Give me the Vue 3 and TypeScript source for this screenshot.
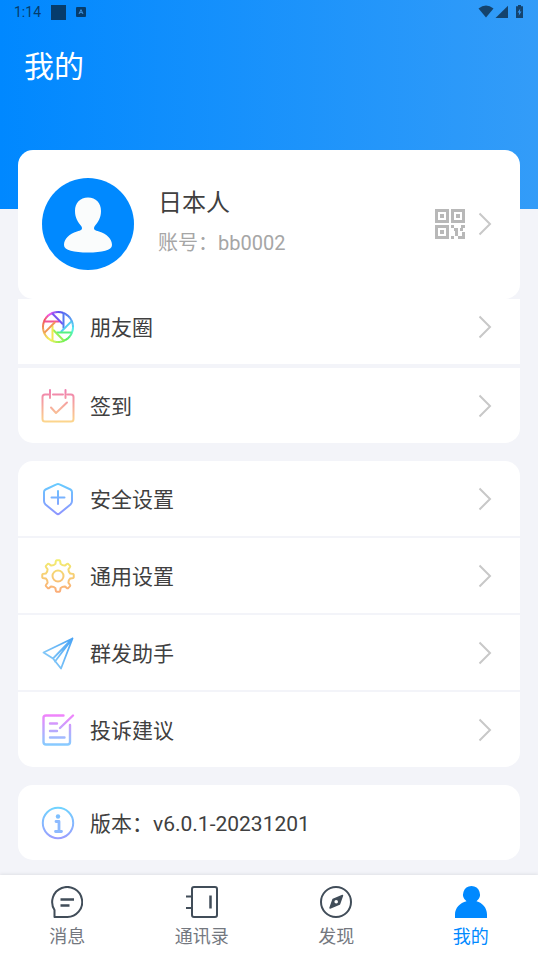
<script setup lang="ts">
interface Row {
  icon: string
  label: string
  href: string
}

const activityRows: Row[] = [
  { icon: 'moments', label: '朋友圈', href: '#moments' },
  { icon: 'checkin', label: '签到', href: '#checkin' },
]

const settingRows: Row[] = [
  { icon: 'shield', label: '安全设置', href: '#security' },
  { icon: 'gear', label: '通用设置', href: '#general' },
  { icon: 'plane', label: '群发助手', href: '#broadcast' },
  { icon: 'note', label: '投诉建议', href: '#feedback' },
]

const groups: { name: string; rows: Row[] }[] = [
  { name: 'activity', rows: activityRows },
  { name: 'settings', rows: settingRows },
]

const tabs = [
  { icon: 'chat', label: '消息', href: '#messages', active: false },
  { icon: 'book', label: '通讯录', href: '#contacts', active: false },
  { icon: 'compass', label: '发现', href: '#discover', active: false },
  { icon: 'me', label: '我的', href: '#me', active: true },
]

// Point on a circle round (17, 17); 0 degrees is up, clockwise.
function point(radius: number, degrees: number): string {
  const a = (degrees * Math.PI) / 180
  return `${(17 + radius * Math.sin(a)).toFixed(2)} ${(17 - radius * Math.cos(a)).toFixed(2)}`
}

// Hue of the colour wheel used by the shutter icon.
function wheel(degrees: number): string {
  const stops = [
    [0, 245], [45, 222], [90, 190], [135, 130], [180, 90],
    [225, 52], [270, 22], [300, -5], [330, -65], [360, -115],
  ]
  const d = ((degrees % 360) + 360) % 360
  for (let i = 1; i < stops.length; i++) {
    const [a, ha] = stops[i - 1]
    const [b, hb] = stops[i]
    if (d <= b) return `hsl(${Math.round(ha + ((hb - ha) * (d - a)) / (b - a))} 85% 64%)`
  }
  return 'hsl(245 85% 64%)'
}

const rim = Array.from({ length: 36 }, (_, i) => ({
  d: `M${point(15, i * 10)}A15 15 0 0 1 ${point(15, i * 10 + 11)}`,
  color: wheel(i * 10 + 5),
}))

const blades = Array.from({ length: 8 }, (_, i) => ({
  turn: `rotate(${i * 45} 17 17)`,
  color: wheel(i * 45 - 50),
}))

const gearPath = (() => {
  let d = ''
  for (let i = 0; i < 8; i++) {
    const a = i * 45
    d += `${i ? 'L' : 'M'}${point(12.4, a - 12)}L${point(14.4, a - 9)}Q${point(15.8, a - 8)} ${point(15.8, a - 5)}`
    d += `L${point(15.8, a + 5)}Q${point(15.8, a + 8)} ${point(14.4, a + 9)}L${point(12.4, a + 12)}`
    d += `Q${point(11.2, a + 22.5)} ${point(12.4, a + 33)}`
  }
  return d + 'Z'
})()
</script>

<template>
  <div class="page">
    <header class="hero">
      <div class="status">
        <div class="status-side">
          <span class="clock">1:14</span>
          <span class="block"></span>
          <svg class="badge" viewBox="0 0 10 10" aria-hidden="true">
            <rect width="10" height="10" rx="1" />
            <path d="M3 7 5 2.6 7 7M3.8 5.6H6.2" class="badge-mark" />
          </svg>
        </div>
        <svg class="signals" viewBox="0 0 46 14" aria-hidden="true">
          <path d="M0.500 3.500Q8-2.600 15.500 3.500L8 12.500Z" />
          <path d="M30 .8V13H17.500Z" />
          <path d="M40 0H43V1.300H45V13H38V1.300H40Z" />
          <path class="bolt" d="M42.300 3.500 39.600 7.600H41.200L40.700 10.800 43.500 6.600H41.800Z" />
        </svg>
      </div>
      <h1 class="title">我的</h1>
    </header>

    <main class="content">
      <a class="profile" href="#profile">
        <svg class="avatar" viewBox="0 0 92 92" aria-hidden="true">
          <circle cx="46" cy="46" r="46" fill="#0089ff" />
          <path
            fill="#fafcfc"
            d="M46 19.500C54 19.500 59 25 59 33C59 40 56 44 52.500 48.500C51 51.500 53 52.500 57 53.500C65 56 70 61 70 67C70 72.500 60 74.500 46 74.500S22 72.500 22 67C22 61 27 56 35 53.500C39 52.500 41 51.500 39.500 48.500C36 44 33 40 33 33C33 25 38 19.500 46 19.500Z"
          />
        </svg>
        <div class="who">
          <strong class="name">日本人</strong>
          <span class="account">账号：bb0002</span>
        </div>
        <svg class="qr" viewBox="0 0 30 30" aria-hidden="true">
          <g fill="none" stroke="#b8b8b8" stroke-width="3">
            <rect x="1.500" y="1.500" width="11" height="11" />
            <rect x="17.500" y="1.500" width="11" height="11" />
            <rect x="1.500" y="17.500" width="11" height="11" />
          </g>
          <g fill="#b8b8b8">
            <path d="M5 5h4v4H5zM21 5h4v4h-4zM5 21h4v4H5z" />
            <path d="M16 16h3v3h-3zM19 19h4v8h-3v-5h-1zM26 16h4v3h-2v3h-3v-3h1zM16 27h3v3h-3zM27 23h3v7h-7v-3h4z" />
          </g>
        </svg>
        <svg class="chevron" viewBox="0 0 14 24" aria-hidden="true"><path d="M1.500 1.500 12 12 1.500 22.500" /></svg>
      </a>

      <nav v-for="group in groups" :key="group.name" class="card" :class="group.name">
        <a v-for="row in group.rows" :key="row.label" class="row" :href="row.href">
          <svg class="icon" viewBox="0 0 34 34" aria-hidden="true">
            <g v-if="row.icon === 'moments'" stroke-linecap="butt">
              <path v-for="part in rim" :key="part.d" :d="part.d" :stroke="part.color" />
              <path v-for="blade in blades" :key="blade.turn" d="M3.500 11.500H18.500" :transform="blade.turn" :stroke="blade.color" />
            </g>
            <g v-else-if="row.icon === 'checkin'" stroke="url(#g-checkin)">
              <path d="M7.500 5.500H4Q1.500 5.500 1.500 8V30Q1.500 32.500 4 32.500H30Q32.500 32.500 32.500 30V8Q32.500 5.500 30 5.500H26.500M12 5.500H22M9 1V9M24.500 1V9" />
              <path d="M10 18.500 15 24 26 13.500" />
            </g>
            <g v-else-if="row.icon === 'shield'" stroke="url(#g-shield)">
              <path d="M15.500 2.300Q17 1.500 18.500 2.300L29.500 7.500Q31 8.300 31 10V19Q31 21 29.500 22.500L18.500 31.500Q17 32.700 15.500 31.500L4.500 22.500Q3 21 3 19V10Q3 8.300 4.500 7.500Z" />
              <path d="M10.500 15.500H23.500M17 9V22L17.010 22" />
            </g>
            <g v-else-if="row.icon === 'gear'" stroke="url(#g-gear)">
              <path :d="gearPath" />
              <circle cx="17" cy="17" r="5.500" />
            </g>
            <g v-else-if="row.icon === 'plane'" stroke="url(#g-plane)" stroke-width="1.800">
              <path d="M31.500 2.500 2.500 16.500 12 22.500 20 32.500ZM12 22.500 31.500 2.500 14 25.500" />
            </g>
            <g v-else stroke="url(#g-note)" stroke-width="2.400">
              <path d="M22.500 2.500H5Q2.500 2.500 2.500 5V29Q2.500 31.500 5 31.500H26.500Q29 31.500 29 29V12M32 2.500 19 15M9 10.500H16M9 18H16M9 24.500H23.500" />
            </g>
          </svg>
          <span class="label">{{ row.label }}</span>
          <svg class="chevron" viewBox="0 0 14 24" aria-hidden="true"><path d="M1.500 1.500 12 12 1.500 22.500" /></svg>
        </a>
      </nav>

      <section class="card">
        <div class="row">
          <svg class="icon" viewBox="0 0 34 34" aria-hidden="true">
            <circle cx="17" cy="17" r="15.200" stroke="url(#g-info)" />
            <circle cx="17" cy="10.500" r="2.200" fill="#7fc0ff" />
            <path d="M15 15.500H18V25M14.500 25.500H20.500" stroke="#8dbaff" stroke-width="2.800" />
          </svg>
          <span class="label">版本：v6.0.1-20231201</span>
        </div>
      </section>
    </main>

    <nav class="tabs">
      <a v-for="tab in tabs" :key="tab.label" class="tab" :class="{ active: tab.active }" :href="tab.href">
        <svg class="tab-icon" viewBox="0 0 32 32" aria-hidden="true">
          <g v-if="tab.icon === 'chat'">
            <path d="M3.500 24A15 15 0 1 1 16 31H3.500Z" />
            <path d="M9.500 13.500H23M9.500 19.500H18.500" stroke-width="2.500" />
          </g>
          <g v-else-if="tab.icon === 'book'">
            <rect x="6" y="1" width="25" height="30" rx="2" />
            <path d="M0 10.500H6M0 22H6" />
            <path d="M24.500 9.500V22.500" stroke-width="2.500" />
          </g>
          <g v-else-if="tab.icon === 'compass'">
            <circle cx="16" cy="16" r="15" />
            <path d="M22.500 9.500 19.500 18 10 22 13 13.500Z" fill="#414d59" stroke-width="1.500" />
            <circle cx="16.200" cy="15.800" r="1.800" fill="#fff" stroke="none" />
          </g>
          <path v-else class="solid" d="M16.500 0A8.500 8.500 0 0 1 21.500 15.300C27.500 17 32 22 32 28.500V32H0V28.500C0 22 5 17 11.500 15.300A8.500 8.500 0 0 1 16.500 0Z" />
        </svg>
        <span>{{ tab.label }}</span>
      </a>
    </nav>

    <svg class="defs" width="0" height="0" aria-hidden="true">
      <defs>
        <linearGradient id="g-checkin" gradientUnits="userSpaceOnUse" x1="0" y1="1" x2="0" y2="33">
          <stop offset="0" stop-color="#f07fb0" /><stop offset="1" stop-color="#fcd68c" />
        </linearGradient>
        <linearGradient id="g-shield" gradientUnits="userSpaceOnUse" x1="0" y1="1" x2="0" y2="33">
          <stop offset="0" stop-color="#66ccff" /><stop offset="1" stop-color="#8f94ff" />
        </linearGradient>
        <linearGradient id="g-gear" gradientUnits="userSpaceOnUse" x1="0" y1="1" x2="0" y2="33">
          <stop offset="0" stop-color="#f2ee70" /><stop offset="1" stop-color="#fbac78" />
        </linearGradient>
        <linearGradient id="g-plane" gradientUnits="userSpaceOnUse" x1="32" y1="2" x2="4" y2="20">
          <stop offset="0" stop-color="#4aa4f5" /><stop offset="1" stop-color="#84c8f8" />
        </linearGradient>
        <linearGradient id="g-note" gradientUnits="userSpaceOnUse" x1="0" y1="2" x2="0" y2="32">
          <stop offset="0" stop-color="#f183fb" /><stop offset="1" stop-color="#86cbff" />
        </linearGradient>
        <linearGradient id="g-info" gradientUnits="userSpaceOnUse" x1="0" y1="1" x2="0" y2="33">
          <stop offset="0" stop-color="#6fd4ff" /><stop offset="1" stop-color="#9a9dff" />
        </linearGradient>
      </defs>
    </svg>
  </div>
</template>

<style>
body {
  background: #f3f4f9;
}
</style>

<style scoped>
.page {
  display: flex;
  flex-direction: column;
  min-height: 100vh;
  color: #404040;
  font-family: Roboto, "Noto Sans CJK SC", sans-serif;
  font-size: 21px;
}
a {
  color: inherit;
  text-decoration: none;
}
.hero {
  box-sizing: border-box;
  height: 209px;
  background: linear-gradient(90deg, #0088ff, #339cf8);
}
.status {
  display: flex;
  align-items: center;
  justify-content: space-between;
  height: 24px;
  padding: 0 14px;
  color: #063c6c;
}
.status-side {
  display: flex;
  align-items: center;
  gap: 10px;
}
.clock {
  font-size: 14px;
}
.block {
  width: 15px;
  height: 15px;
  background: #063c6c;
}
.badge {
  width: 10px;
  height: 10px;
  fill: #063c6c;
}
.badge-mark {
  fill: none;
  stroke: #3d93e0;
}
.signals {
  width: 46px;
  height: 14px;
  fill: #14436d;
}
.signals .bolt {
  fill: #3196f5;
}
.title {
  margin: 21px 24px 0;
  color: #fff;
  font-size: 30px;
  font-weight: 400;
  line-height: 44px;
}
.content {
  flex: 1;
  margin-top: -59px;
  padding: 0 18px 15px;
}
.profile {
  position: relative;
  z-index: 1;
  display: flex;
  align-items: center;
  box-sizing: border-box;
  min-height: 149px;
  padding: 0 28px 2px 24px;
  border-radius: 15px;
  background: #fff;
}
.avatar {
  width: 92px;
  height: 92px;
}
.who {
  display: flex;
  flex: 1;
  flex-direction: column;
  gap: 8px;
  margin-left: 24px;
  padding-bottom: 4px;
}
.name {
  font-size: 24px;
  font-weight: 400;
  line-height: 34px;
}
.account {
  color: #a6a6a6;
  font-size: 20px;
  line-height: 30px;
}
.qr {
  width: 30px;
  height: 30px;
  margin-right: 13px;
}
.chevron {
  width: 14px;
  height: 24px;
  fill: none;
  stroke: #c8c8c8;
  stroke-width: 2;
}
.card {
  display: flex;
  flex-direction: column;
  gap: 2px;
  overflow: hidden;
  margin-bottom: 18px;
  border-radius: 15px;
}
.card:last-child {
  margin-bottom: 0;
}
/* The first list has square top corners; its top edge sits beneath the profile card. */
.activity {
  gap: 4px;
  border-radius: 0 0 15px 15px;
}
.activity .row:first-child {
  height: 65px;
  padding-bottom: 9px;
  box-sizing: border-box;
}
.row {
  display: flex;
  align-items: center;
  height: 75px;
  padding: 0 28px 0 23px;
  background: #fff;
}
.icon {
  width: 34px;
  height: 34px;
  fill: none;
  stroke-width: 2;
  stroke-linejoin: round;
  stroke-linecap: round;
}
.label {
  flex: 1;
  margin-left: 15px;
  padding-top: 2px;
  line-height: 32px;
}
.tabs {
  position: sticky;
  bottom: 0;
  z-index: 2;
  display: flex;
  height: 84px;
  background: #fff;
  box-shadow: 0 -1px 3px #dfe1e6;
}
.tab {
  display: flex;
  flex: 1;
  flex-direction: column;
  align-items: center;
  gap: 5px;
  padding-top: 11px;
  color: #74787f;
  font-size: 18px;
  line-height: 28px;
}
.tab-icon {
  width: 32px;
  height: 32px;
  fill: none;
  stroke: #414d59;
  stroke-width: 2;
  stroke-linejoin: round;
}
.solid {
  fill: #0089ff;
  stroke: none;
}
.active {
  color: #0089ff;
}
.defs {
  position: absolute;
}
</style>
